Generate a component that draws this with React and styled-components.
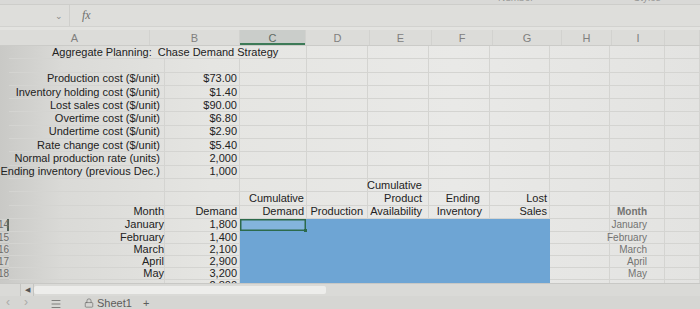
import React from 'react';
import styled, { createGlobalStyle } from 'styled-components';
import { Lock, Menu } from 'lucide-react';

const GlobalStyle = createGlobalStyle`
    html, body {
        margin: 0;
        padding: 0;
        background: #e2e2df;
    }
    body {
        font-family: 'Liberation Sans', Arial, sans-serif;
    }
`;

const BODY_COLS = '9px 156px 75px 67px 61px 61px 61px 60px 60px 55px 35px';
const HEAD_COLS = '150px 90px 66px 64px 62px 61px 69px 50px 53px 35px';
const KEYS = ['R', 'A', 'B', 'C', 'D', 'E', 'F', 'G', 'H', 'I', 'J'];

const Screen = styled.div`
    width: 700px;
    height: 309px;
    overflow: hidden;
    display: flex;
    flex-direction: column;
    background: linear-gradient(90deg, #c9c9c6 0%, #dadad7 9%, #e5e5e2 30%, #e9e9e7 65%, #e3e3e1 100%);
    color: #222;

    & > * {
        flex-shrink: 0;
    }
`;

const Ribbon = styled.div`
    height: 4px;
    overflow: hidden;
    display: flex;
    background: #d9d9d7;
    border-bottom: 1px solid #cdcdca;
`;

const RibbonLabel = styled.span`
    margin-top: -8px;
    margin-left: ${p => p.$left}px;
    font-size: 10px;
    color: #9a9a98;
`;

const FormulaBar = styled.div`
    height: 21px;
    display: flex;
    align-items: center;
    background: #dededb;
    border-bottom: 1px solid #d2d2cf;
`;

const NameBox = styled.div`
    width: 70px;
    height: 100%;
    display: flex;
    align-items: center;
    justify-content: flex-end;
    padding-right: 6px;
    box-sizing: border-box;
    border-right: 1px solid #cfcfcc;
    color: #8a8a88;
    font-size: 9px;
`;

const Fx = styled.span`
    margin-left: 12px;
    font-family: 'Liberation Serif', 'Times New Roman', serif;
    font-style: italic;
    font-size: 12px;
    color: #6f6f6d;
`;

const Spacer = styled.div`
    height: 3px;
    background: #e3e3e0;
`;

const HeadRow = styled.div`
    display: grid;
    grid-template-columns: ${HEAD_COLS};
    height: 15px;
    background: #dcdcd9;
    border-bottom: 1px solid #cbcbc8;
`;

const ColHead = styled.div`
    display: flex;
    align-items: center;
    justify-content: center;
    font-size: 11px;
    color: ${p => (p.$selected ? '#5f6a63' : '#80807e')};
    background: ${p => (p.$selected ? '#cacdca' : 'transparent')};
    border-right: 1px solid #d2d2cf;
    box-shadow: ${p => (p.$selected ? 'inset 0 -2px 0 #3d7a57' : 'none')};
`;

const Row = styled.div`
    display: grid;
    grid-template-columns: ${BODY_COLS};
    height: ${p => p.$h}px;
    overflow: ${p => (p.$clip ? 'hidden' : 'visible')};
`;

const RowHead = styled.div`
    display: flex;
    align-items: center;
    justify-content: flex-end;
    overflow: hidden;
    font-size: 10px;
    color: #6d6d6b;
    background: ${p => (p.$num ? '#d2d2cf' : 'transparent')};
    box-shadow: ${p => (p.$active ? 'inset -2px 0 0 #55645b' : 'none')};
    border-bottom: 1px solid ${p => (p.$num ? '#c6c6c3' : 'transparent')};
`;

const Cell = styled.div`
    position: relative;
    grid-column: span ${p => p.$span || 1};
    display: flex;
    align-items: ${p => (p.$top ? 'flex-start' : 'center')};
    justify-content: ${p => (p.$left ? 'flex-start' : 'flex-end')};
    padding: ${p => (p.$left ? `0 0 0 ${p.$indent || 3}px` : `0 ${p.$pr ?? 3}px 0 0`)};
    white-space: pre;
    font-size: ${p => (p.$muted ? 10 : 11)}px;
    line-height: 11px;
    font-weight: ${p => (p.$bold ? 700 : 400)};
    color: ${p => (p.$muted ? '#737371' : '#222')};
    background: ${p => (p.$active ? '#84b4dc' : p.$blue ? '#6ea5d4' : 'transparent')};
    border-right: 1px solid ${p => (p.$blue ? '#6ea5d4' : '#d4d4d1')};
    border-bottom: 1px solid ${p => (p.$blue ? '#6ea5d4' : '#d4d4d1')};
    box-shadow: ${p => (p.$active ? 'inset 0 0 0 1.5px #2c6a4b' : 'none')};

    &::after {
        content: '';
        display: ${p => (p.$active ? 'block' : 'none')};
        position: absolute;
        right: -2px;
        bottom: -2px;
        width: 4px;
        height: 4px;
        background: #2c6a4b;
    }
`;

const ScrollBar = styled.div`
    height: 12px;
    display: flex;
    align-items: stretch;
    background: #dadad7;
    border-top: 1px solid #c8c8c5;
`;

const ScrollButton = styled.div`
    margin-left: 20px;
    width: 12px;
    display: flex;
    align-items: center;
    justify-content: center;
    font-size: 7px;
    color: #555;
    border-left: 1px solid #c4c4c1;
    border-right: 1px solid #c4c4c1;
`;

const Thumb = styled.div`
    width: 292px;
    margin: 2px 0;
    background: #ededeb;
    border-radius: 2px;
`;

const TabBar = styled.div`
    flex: 1 1 auto;
    min-height: 0;
    overflow: hidden;
    display: flex;
    align-items: flex-start;
    padding-top: 1px;
    background: #d6d6d3;
    color: #5d5d5b;
    font-size: 11px;
`;

const NavArrow = styled.span`
    margin-left: ${p => p.$left}px;
    color: #aaaaa8;
    font-size: 12px;
    line-height: 11px;
`;

const TabIcon = styled.span`
    display: flex;
    margin-left: ${p => p.$left}px;
    margin-top: ${p => p.$top || 0}px;
    color: #6a6a68;
`;

const TabText = styled.span`
    margin-left: ${p => p.$left}px;
    line-height: 12px;
`;

const params = [
    ['Production cost ($/unit)', '$73.00'],
    ['Inventory holding cost ($/unit)', '$1.40'],
    ['Lost sales cost ($/unit)', '$90.00'],
    ['Overtime cost ($/unit)', '$6.80'],
    ['Undertime cost ($/unit)', '$2.90'],
    ['Rate change cost ($/unit)', '$5.40'],
    ['Normal production rate (units)', '2,000'],
    ['Ending inventory (previous Dec.)', '1,000'],
];

const months = [
    ['January', '1,800'],
    ['February', '1,400'],
    ['March', '2,100'],
    ['April', '2,900'],
    ['May', '3,200'],
];

const BLUE = ['C', 'D', 'E', 'F', 'G'];

const rows = [];
rows.push({
    h: 13.3,
    cells: { A: { text: 'Aggregate Planning:  Chase Demand Strategy', left: true, indent: 43, span: 3 } },
    skip: ['B', 'C'],
});
rows.push({ h: 13.3, cells: {} });
params.forEach(([label, value]) => {
    rows.push({ h: 13.3, cells: { A: { text: label, pr: 4 }, B: { text: value, pr: 2 } } });
});
rows.push({ h: 13.3, cells: { E: { text: 'Cumulative', pr: 6 } } });
rows.push({
    h: 13.3,
    cells: {
        C: { text: 'Cumulative', pr: 2 },
        E: { text: 'Product', pr: 6 },
        F: { text: 'Ending', pr: 9 },
        G: { text: 'Lost', pr: 2 },
    },
});
rows.push({
    h: 13.3,
    cells: {
        A: { text: 'Month', pr: 0 },
        B: { text: 'Demand', pr: 2 },
        C: { text: 'Demand', pr: 2 },
        D: { text: 'Production', pr: 4 },
        E: { text: 'Availability', pr: 6 },
        F: { text: 'Inventory', pr: 7 },
        G: { text: 'Sales', pr: 2 },
        I: { text: 'Month', pr: 17, muted: true, bold: true },
    },
});
months.forEach(([m, d], i) => {
    const cells = {
        A: { text: m, pr: 0 },
        B: { text: d, pr: 2 },
        I: { text: m, pr: 17, muted: true },
    };
    BLUE.forEach(k => {
        cells[k] = { ...(cells[k] || {}), blue: true, active: i === 0 && k === 'C' };
    });
    rows.push({ h: i === 0 ? 13 : 12, num: 14 + i, cells });
});
const lastCells = { B: { text: '2,800', pr: 2, top: true } };
BLUE.forEach(k => {
    lastCells[k] = { blue: true };
});
rows.push({ h: 3, clip: true, cells: lastCells });

const App = () => {
    return (
        <>
            <GlobalStyle />
            <Screen>
                <Ribbon>
                    <RibbonLabel $left={498}>Number</RibbonLabel>
                    <RibbonLabel $left={100}>Styles</RibbonLabel>
                </Ribbon>
                <FormulaBar>
                    <NameBox>⌄</NameBox>
                    <Fx>fx</Fx>
                </FormulaBar>
                <Spacer />
                <HeadRow>
                    {['A', 'B', 'C', 'D', 'E', 'F', 'G', 'H', 'I', ''].map((c, i) => (
                        <ColHead key={i} $selected={c === 'C'}>{c}</ColHead>
                    ))}
                </HeadRow>
                {rows.map((row, r) => (
                    <Row key={r} $h={row.h} $clip={row.clip}>
                        {KEYS.map(k => {
                            if (k === 'R') {
                                return (
                                    <RowHead key={k} $num={!!row.num} $active={row.num === 14}>
                                        {row.num || ''}
                                    </RowHead>
                                );
                            }
                            if (row.skip && row.skip.includes(k)) return null;
                            const c = row.cells[k] || {};
                            return (
                                <Cell
                                    key={k}
                                    $span={c.span}
                                    $left={c.left}
                                    $indent={c.indent}
                                    $pr={c.pr}
                                    $muted={c.muted}
                                    $bold={c.bold}
                                    $blue={c.blue}
                                    $active={c.active}
                                    $top={c.top}
                                >
                                    {c.text}
                                </Cell>
                            );
                        })}
                    </Row>
                ))}
                <ScrollBar>
                    <ScrollButton>◀</ScrollButton>
                    <Thumb />
                </ScrollBar>
                <TabBar>
                    <NavArrow $left={6}>‹</NavArrow>
                    <NavArrow $left={14}>›</NavArrow>
                    <TabIcon $left={22} $top={1}><Menu size={12} strokeWidth={1.6} /></TabIcon>
                    <TabIcon $left={22} $top={1}><Lock size={10} strokeWidth={1.6} /></TabIcon>
                    <TabText $left={3}>Sheet1</TabText>
                    <TabText $left={11}>+</TabText>
                </TabBar>
            </Screen>
        </>
    );
};

export default App;
